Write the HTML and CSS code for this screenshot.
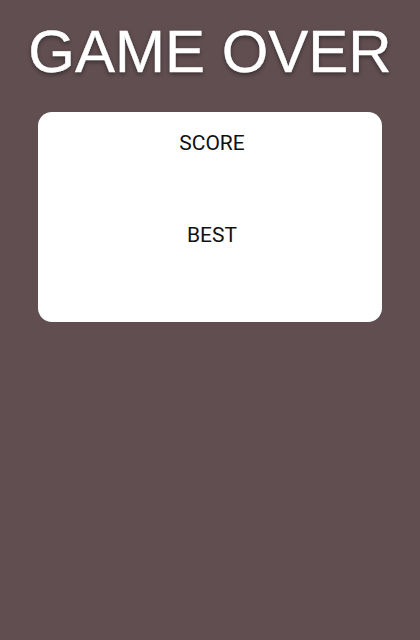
FILE: index.html
```html
<!DOCTYPE html>
<html>
<head>
<meta charset="utf-8">
<link rel="stylesheet" href="styles.css">
</head>
<body>
<div class="screen">
  <h1 class="title">GAME OVER</h1>
  <div class="card">
    <div class="label score">SCORE</div>
    <div class="label best">BEST</div>
  </div>
</div>
</body>
</html>
```
FILE: styles.css
```css
html, body {
  margin: 0;
  padding: 0;
  background: #604e51;
}
.screen {
  width: 420px;
  height: 640px;
  padding-top: 22px;
  box-sizing: border-box;
}
.title {
  margin: 0;
  font-family: "Liberation Sans", Arial, sans-serif;
  font-weight: normal;
  font-size: 60px;
  line-height: 59px;
  color: #ffffff;
  text-align: center;
  text-shadow: 0 2px 4px rgba(0, 0, 0, 0.45);
  -webkit-text-stroke: 0.4px #ffffff;
}
.card {
  margin: 31px 38px 0 38px;
  height: 210px;
  padding-left: 4px;
  background: #ffffff;
  border-radius: 14px;
  display: flex;
  flex-direction: column;
  align-items: center;
}
.label {
  font-family: Roboto, "Liberation Sans", sans-serif;
  font-size: 21px;
  line-height: 24px;
  color: #111111;
}
.score {
  margin-top: 19px;
}
.best {
  margin-top: 68px;
}
```
